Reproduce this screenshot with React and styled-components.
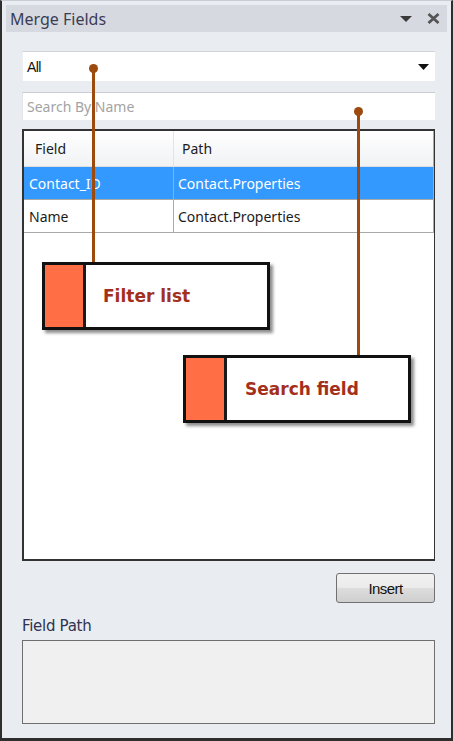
import styled, { createGlobalStyle } from 'styled-components';

const GlobalStyle = createGlobalStyle`
  html, body {
    margin: 0;
    padding: 0;
    background: #ffffff;
  }
  * {
    box-sizing: border-box;
  }
`;

const Window = styled.div`
  position: relative;
  width: 453px;
  height: 741px;
  background: #e9ecf1;
  border-left: 2px solid #2e2e2e;
  border-right: 2px solid #2e2e2e;
  border-bottom: 3px solid #2e2e2e;
  border-top: 1px solid #c9cdd3;
  padding: 4px 4px 0 4px;
  font-family: 'Noto Sans', 'Open Sans', sans-serif;
  display: flex;
  flex-direction: column;
`;

const TitleBar = styled.div`
  height: 27px;
  background: #d6dae0;
  display: flex;
  align-items: center;
  padding: 0 7px 0 4px;
  color: #3c3d55;
  font-size: 16px;
`;

const Title = styled.span`
  flex: 1;
`;

const TitleButtons = styled.div`
  display: flex;
  align-items: center;
  gap: 15px;
`;

const Body = styled.div`
  flex: 1;
  display: flex;
  flex-direction: column;
  padding: 19px 12px 0 16px;
`;

const Select = styled.div`
  height: 30px;
  background: #ffffff;
  border-top: 1px solid #d0d3d8;
  border-left: 1px solid #eceef2;
  display: flex;
  align-items: center;
  padding: 0 6px 0 4px;
  font-family: 'Liberation Sans', Arial, sans-serif;
  font-size: 14px;
  letter-spacing: -0.6px;
  color: #111;
`;

const SelectValue = styled.span`
  flex: 1;
`;

const Search = styled.div`
  margin-top: 11px;
  height: 28px;
  background: #ffffff;
  border-top: 1px solid #c9ccd2;
  border-left: 1px solid #e2e4e8;
  display: flex;
  align-items: center;
  padding: 0 4px;
  font-size: 14px;
  color: #a3a3a3;
`;

const Table = styled.div`
  margin-top: 9px;
  height: 432px;
  background: #ffffff;
  border: 2px solid #333333;
  border-right-width: 1px;
  display: flex;
  flex-direction: column;
`;

const Row = styled.div`
  display: grid;
  grid-template-columns: 150px 1fr;
  height: ${(p) => (p.$head ? 36 : 33)}px;
  background: ${(p) => (p.$selected ? '#3399ff' : p.$head ? 'linear-gradient(#ffffff, #f1f2f4)' : '#ffffff')};
  color: ${(p) => (p.$selected ? '#ffffff' : '#1b1b1b')};
  border-bottom: 1px solid ${(p) => (p.$head ? '#dcdfe3' : '#a9a9a9')};
  border-right: 1px solid #a9a9a9;
  font-size: 14px;
`;

const Cell = styled.div`
  display: flex;
  align-items: center;
  padding-left: ${(p) => (p.$head ? (p.$first ? 11 : 8) : p.$first ? 5 : 4)}px;
  border-right: ${(p) => (p.$first ? `1px solid ${p.$head ? '#e2e4e8' : '#a9a9a9'}` : 'none')};
`;

const ButtonRow = styled.div`
  display: flex;
  justify-content: flex-end;
  margin-top: 12px;
`;

const Button = styled.button`
  width: 99px;
  height: 30px;
  border: 1px solid #707070;
  border-radius: 3px;
  background: linear-gradient(#f2f2f2 0%, #ebebeb 50%, #dddddd 51%, #cfcfcf 100%);
  font-family: 'Liberation Sans', Arial, sans-serif;
  font-size: 15px;
  letter-spacing: -0.6px;
  color: #111;
  padding: 0;
`;

const Label = styled.div`
  margin-top: 14px;
  font-family: 'DejaVu Sans', Verdana, sans-serif;
  font-size: 15px;
  color: #2f3350;
  letter-spacing: -0.3px;
`;

const PathBox = styled.div`
  margin-top: 5px;
  height: 84px;
  background: #f0f0f0;
  border: 1px solid #6f6f6f;
`;

const Leader = styled.div`
  position: absolute;
  left: ${(p) => p.$x}px;
  top: ${(p) => p.$y}px;
  width: 3px;
  height: ${(p) => p.$h}px;
  background: #9c4a0e;

  &::before {
    content: '';
    position: absolute;
    left: -3px;
    top: -4px;
    width: 9px;
    height: 9px;
    border-radius: 50%;
    background: #9c4a0e;
  }
`;

const Callout = styled.div`
  position: absolute;
  left: ${(p) => p.$x}px;
  top: ${(p) => p.$y}px;
  width: 228px;
  height: 68px;
  border: 3px solid #111111;
  background: #ffffff;
  display: flex;
  box-shadow: 3px 3px 3px rgba(0, 0, 0, 0.45);
`;

const Swatch = styled.div`
  width: 41px;
  background: #ff6e45;
  border-right: 3px solid #1a1a1a;
`;

const CalloutText = styled.div`
  flex: 1;
  display: flex;
  align-items: center;
  padding-left: ${(p) => p.$pad}px;
  font-family: 'DejaVu Sans', Verdana, sans-serif;
  font-weight: bold;
  font-size: 17px;
  color: #a3301c;
`;

export default function App() {
  return (
    <>
      <GlobalStyle />
      <Window>
        <TitleBar>
          <Title>Merge Fields</Title>
          <TitleButtons>
            <svg width="12" height="6" viewBox="0 0 12 6">
              <path d="M0 0 H12 L6 6 Z" fill="#3a3a3a" />
            </svg>
            <svg width="13" height="11" viewBox="0 0 13 11">
              <path d="M1.5 1 L11.5 10 M11.5 1 L1.5 10" stroke="#555" strokeWidth="2.8" />
            </svg>
          </TitleButtons>
        </TitleBar>
        <Body>
          <Select>
            <SelectValue>All</SelectValue>
            <svg width="11" height="6" viewBox="0 0 11 6">
              <path d="M0 0 H11 L5.5 6 Z" fill="#111" />
            </svg>
          </Select>
          <Search>Search By Name</Search>
          <Table>
            <Row $head>
              <Cell $head $first>Field</Cell>
              <Cell $head>Path</Cell>
            </Row>
            <Row $selected>
              <Cell $first>Contact_ID</Cell>
              <Cell>Contact.Properties</Cell>
            </Row>
            <Row>
              <Cell $first>Name</Cell>
              <Cell>Contact.Properties</Cell>
            </Row>
          </Table>
          <ButtonRow>
            <Button>Insert</Button>
          </ButtonRow>
          <Label>Field Path</Label>
          <PathBox />
        </Body>

        <Leader $x={90} $y={67} $h={195} />
        <Leader $x={355} $y={110} $h={245} />
        <Callout $x={40} $y={261}>
          <Swatch />
          <CalloutText $pad={17}>Filter list</CalloutText>
        </Callout>
        <Callout $x={181} $y={354}>
          <Swatch />
          <CalloutText $pad={18}>Search field</CalloutText>
        </Callout>
      </Window>
    </>
  );
}
